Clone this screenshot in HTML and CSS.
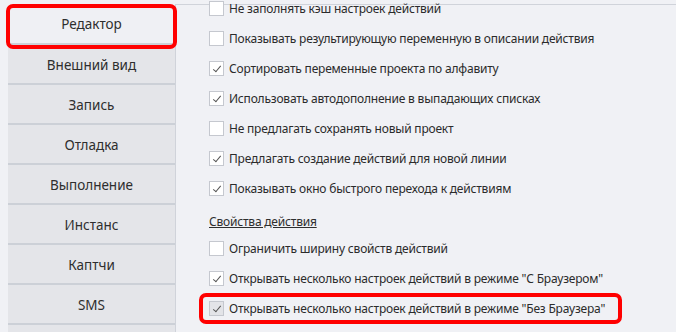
FILE: index.html
```html
<!DOCTYPE html>
<html lang="ru">
<head>
    <meta charset="UTF-8">
    <title>Настройки</title>
    <link rel="stylesheet" href="styles.css">
</head>
<body>
    <div class="settings">
        <div class="tabs">
            <div class="tab active">Редактор</div>
            <div class="tab">Внешний вид</div>
            <div class="tab">Запись</div>
            <div class="tab">Отладка</div>
            <div class="tab">Выполнение</div>
            <div class="tab">Инстанс</div>
            <div class="tab">Каптчи</div>
            <div class="tab">SMS</div>
            <div class="tab"></div>
        </div>

        <div class="panel">
            <div class="options">
                <label class="option"><span class="box"></span>Не заполнять кэш настроек действий</label>
                <label class="option"><span class="box"></span>Показывать результирующую переменную в описании действия</label>
                <label class="option"><span class="box checked"></span>Сортировать переменные проекта по алфавиту</label>
                <label class="option"><span class="box checked"></span>Использовать автодополнение в выпадающих списках</label>
                <label class="option"><span class="box"></span>Не предлагать сохранять новый проект</label>
                <label class="option"><span class="box checked"></span>Предлагать создание действий для новой линии</label>
                <label class="option"><span class="box checked"></span>Показывать окно быстрого перехода к действиям</label>

                <div class="group-title">Свойства действия</div>

                <label class="option"><span class="box"></span>Ограничить ширину свойств действий</label>
                <label class="option"><span class="box checked"></span>Открывать несколько настроек действий в режиме "С Браузером"</label>
                <label class="option marked"><span class="box checked disabled"></span>Открывать несколько настроек действий в режиме "Без Браузера"</label>
            </div>
        </div>
    </div>
</body>
</html>
```

FILE: styles.css
```css
body { margin: 0; background-color: #f0f1f5; font-family: "Noto Sans", "DejaVu Sans", sans-serif; color: #2b2b2b; overflow: hidden; }
.settings { display: flex; height: 332px; overflow: hidden; }

.tabs { width: 167px; margin-left: 8px; padding-top: 5px; flex-shrink: 0; }
.tab { position: relative; height: 38px; line-height: 40px; border-bottom: 2px solid #ccd0d7; background-color: #e4e5e9; text-align: center; font-size: 13.5px; color: #2e2e2e; }
.tab.active { background-color: #eff0f4; line-height: 38px; z-index: 1; }
.tab.active::after { content: ""; position: absolute; left: -2px; right: -2px; top: -1px; bottom: -6px; border: 4px solid #ff0000; border-radius: 7px; }

.panel { flex: 1; border-top: 1px solid #d0d3da; border-left: 1px solid #d0d3da; margin-top: 4px; padding-left: 33px; }
.options { margin-top: -12px; }
.option { position: relative; display: flex; align-items: center; gap: 5px; height: 30px; font-size: 12px; letter-spacing: -0.2px; white-space: nowrap; }
.box { width: 13px; height: 13px; border: 1px solid #c5c8cf; background-color: #ffffff; flex-shrink: 0; position: relative; }
.box.checked::after { content: ""; position: absolute; left: 5px; top: 2px; width: 3px; height: 7px; border-right: 1px solid #555; border-bottom: 1px solid #555; transform: rotate(40deg); }
.box.disabled { background-color: #e3e4e8; }
.group-title { height: 30px; line-height: 38px; font-size: 12px; letter-spacing: -0.2px; text-decoration: underline; color: #2e2e2e; }
.option.marked::after { content: ""; position: absolute; left: -10px; top: 0; width: 415px; height: 23px; border: 4px solid #ff0000; border-radius: 7px; }
```
